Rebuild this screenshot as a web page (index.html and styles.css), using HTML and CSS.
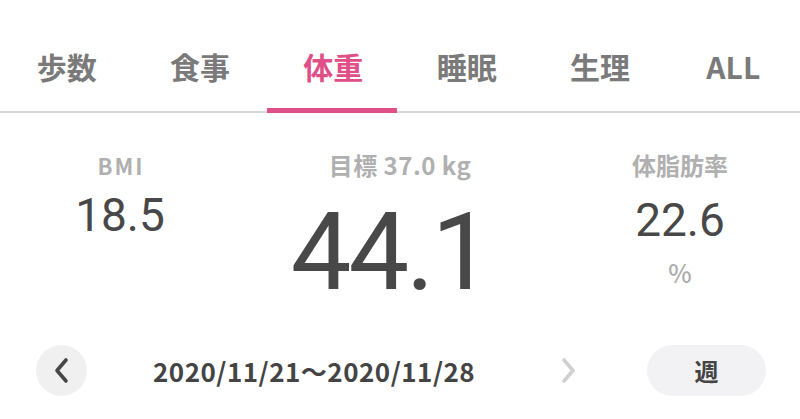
FILE: index.html
```html
<!DOCTYPE html>
<html lang="ja">
<head>
<meta charset="utf-8">
<link rel="stylesheet" href="styles.css">
</head>
<body>
<nav class="tabs">
  <div class="tab">歩数</div>
  <div class="tab">食事</div>
  <div class="tab active">体重</div>
  <div class="tab">睡眠</div>
  <div class="tab">生理</div>
  <div class="tab">ALL</div>
</nav>
<section class="stats">
  <div class="stat side">
    <div class="label bmi">BMI</div>
    <div class="num small">18.5</div>
  </div>
  <div class="stat main">
    <div class="label goal">目標 37.0 kg</div>
    <div class="num big">44.1</div>
  </div>
  <div class="stat side">
    <div class="label fat">体脂肪率</div>
    <div class="num small right">22.6</div>
    <div class="unit">%</div>
  </div>
</section>
<footer class="range">
  <button class="circle" aria-label="前へ">
    <svg width="17" height="27" viewBox="0 0 17 27"><polyline points="13,3 4,13.5 13,24" fill="none" stroke="#474747" stroke-width="3.6" stroke-linecap="round" stroke-linejoin="round"/></svg>
  </button>
  <div class="date">2020/11/21～2020/11/28</div>
  <div class="next">
    <svg width="17" height="27" viewBox="0 0 17 27"><polyline points="4,3 13,13.5 4,24" fill="none" stroke="#d0d0d0" stroke-width="3.6" stroke-linecap="round" stroke-linejoin="round"/></svg>
  </div>
  <button class="pill">週</button>
</footer>
</body>
</html>
```
FILE: styles.css
```css
html, body {
  margin: 0;
  padding: 0;
  background: #ffffff;
}
body {
  width: 800px;
  height: 419px;
  overflow: hidden;
  font-family: "Noto Sans CJK JP", "Noto Sans", sans-serif;
}
.tabs {
  display: grid;
  grid-template-columns: repeat(6, 1fr);
  height: 111px;
  border-bottom: 2px solid #d6d6d6;
}
.tab {
  position: relative;
  display: flex;
  align-items: center;
  justify-content: center;
  padding-top: 21px;
  font-size: 30px;
  font-weight: 700;
  color: #7a7a7a;
  line-height: 1;
}
.tab.active {
  color: #df4f88;
}
.tab.active::after {
  content: "";
  position: absolute;
  left: 0;
  right: 3px;
  bottom: -2px;
  height: 5px;
  background: #df4f88;
}
.stats {
  display: grid;
  grid-template-columns: 240px 1fr 240px;
  height: 191px;
  padding-top: 41px;
}
.stat {
  display: flex;
  flex-direction: column;
  align-items: center;
}
.label {
  font-size: 22px;
  line-height: 22px;
  font-weight: 700;
  color: #b0b0b0;
}
.label.bmi {
  letter-spacing: 2px;
  padding-left: 2px;
}
.label.goal {
  font-size: 24px;
  letter-spacing: 0.5px;
}
.label.fat {
  font-size: 24px;
}
.num {
  font-family: Roboto, "Noto Sans", sans-serif;
  color: #484848;
  line-height: 1;
}
.num.small {
  font-size: 46px;
  margin-top: 16px;
}
.num.small.right {
  font-size: 46px;
  margin-top: 21px;
}
.num.big {
  font-size: 108px;
  margin-top: 22px;
  margin-right: 20px;
  letter-spacing: -3px;
}
.unit {
  margin-top: 17px;
  font-size: 25px;
  line-height: 1;
  color: #adadad;
  font-family: "Noto Sans CJK JP", sans-serif;
  font-weight: 500;
}
.range {
  display: flex;
  align-items: center;
  height: 51px;
  padding-left: 36px;
}
button {
  border: none;
  padding: 0;
  margin: 0;
  font: inherit;
}
.circle {
  width: 51px;
  height: 51px;
  border-radius: 50%;
  background: #f0f0f0;
  display: flex;
  align-items: center;
  justify-content: center;
}
.date {
  margin-left: 66px;
  width: 321px;
  font-size: 26px;
  font-weight: 700;
  letter-spacing: 0.5px;
  color: #444444;
  line-height: 1;
  white-space: nowrap;
}
.next {
  margin-left: 86px;
  width: 17px;
  height: 27px;
  display: flex;
}
.pill {
  margin-left: 70px;
  width: 119px;
  height: 51px;
  border-radius: 26px;
  background: #f2f2f4;
  font-size: 24px;
  font-weight: 700;
  color: #444444;
  line-height: 1;
}
```
